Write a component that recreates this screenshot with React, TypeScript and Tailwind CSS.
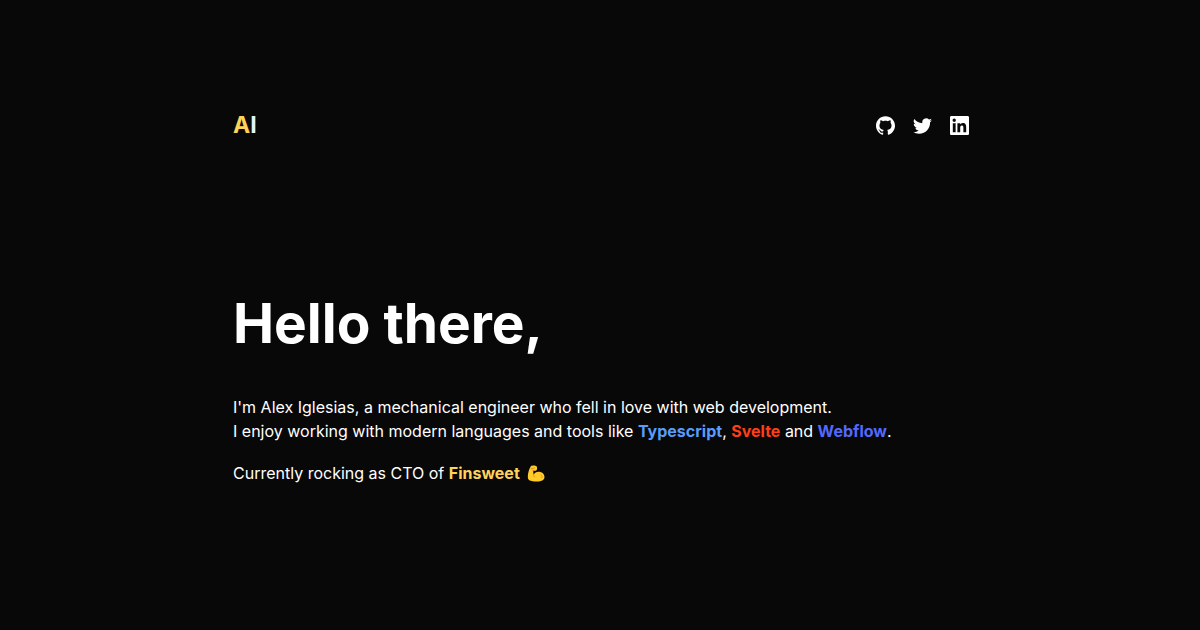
import React from "react";
import { BsTwitter } from "react-icons/bs";
import { SiGithub } from "react-icons/si";

function LinkedIn() {
  return (
    <svg viewBox="0 0 24 24" width="19" height="19" fill="currentColor" aria-hidden="true">
      <path d="M20.447 20.452h-3.554v-5.569c0-1.328-.027-3.037-1.852-3.037-1.853 0-2.136 1.445-2.136 2.939v5.667H9.351V9h3.414v1.561h.046c.477-.9 1.637-1.85 3.37-1.85 3.601 0 4.267 2.37 4.267 5.455v6.286zM5.337 7.433c-1.144 0-2.063-.926-2.063-2.065 0-1.138.92-2.063 2.063-2.063 1.14 0 2.064.925 2.064 2.063 0 1.139-.925 2.065-2.064 2.065zm1.782 13.019H3.555V9h3.564v11.452zM22.225 0H1.771C.792 0 0 .774 0 1.729v20.542C0 23.227.792 24 1.771 24h20.451C23.2 24 24 23.227 24 22.271V1.729C24 .774 23.2 0 22.222 0h.003z" />
    </svg>
  );
}

function FlexedArm() {
  return (
    <svg viewBox="0 0 36 34" width="18" height="17" role="img" aria-label="Flexed biceps" className="ml-[3px] inline-block align-[-3px]">
      <path
        fill="#ffcb2b"
        d="M8 2C10 .5 17 0 19 2.500c2 2.500 1.500 7-.5 8.500-1.500 1-4 .5-5.500 0-.8 2.500-.5 5.500.5 8 1.500-3 5-5.500 9.500-5.500C30 13.500 35 18 35 24c0 6-6 9-15 9-8 0-14.500-1-17-4C0 25 2.500 10 8 2z"
      />
      <path fill="none" stroke="#e58b16" strokeWidth="1.800" strokeLinecap="round" d="M8.500 6.500c2.500 1 5 .5 7-1M13 11l-3-1.500M13.500 19c-.5 2 0 3.500 1.500 5M28 20c2 1.500 2.500 3.500 2 5.500" />
    </svg>
  );
}

export default function App() {
  return (
    <div className="min-h-screen bg-[#080808] pl-0.5 font-['Inter',sans-serif] text-white">
      <div className="mx-auto max-w-[736px] pt-[107px]">
        <header className="flex items-center justify-between">
          <a href="#home" className="text-[23px] leading-9 font-bold text-[#e3f3fc]">
            <span className="text-[#ffd25a]">A</span>I
          </a>
          <nav className="flex items-center gap-[18px]">
            <a href="#github" aria-label="GitHub"><SiGithub size={19} /></a>
            <a href="#twitter" aria-label="Twitter"><BsTwitter size={19} /></a>
            <a href="#linkedin" aria-label="LinkedIn"><LinkedIn /></a>
          </nav>
        </header>
        <main className="pt-[146px]">
          <h1 className="text-[55px] leading-[68px] font-bold">Hello there,</h1>
          <p className="mt-[38px] text-base leading-6">
            I'm Alex Iglesias, a mechanical engineer who fell in love with web development.
            <br />
            I enjoy working with modern languages and tools like{" "}
            <strong className="font-bold text-[#5a9cf8]">Typescript</strong>,{" "}
            <strong className="font-bold text-[#ff3e1a]">Svelte</strong> and{" "}
            <strong className="font-bold text-[#5468ff]">Webflow</strong>.
          </p>
          <p className="mt-[18px] text-base leading-6">
            Currently rocking as CTO of{" "}
            <strong className="font-bold text-[#ffd25a]">Finsweet</strong> <FlexedArm />
          </p>
        </main>
      </div>
    </div>
  );
}
